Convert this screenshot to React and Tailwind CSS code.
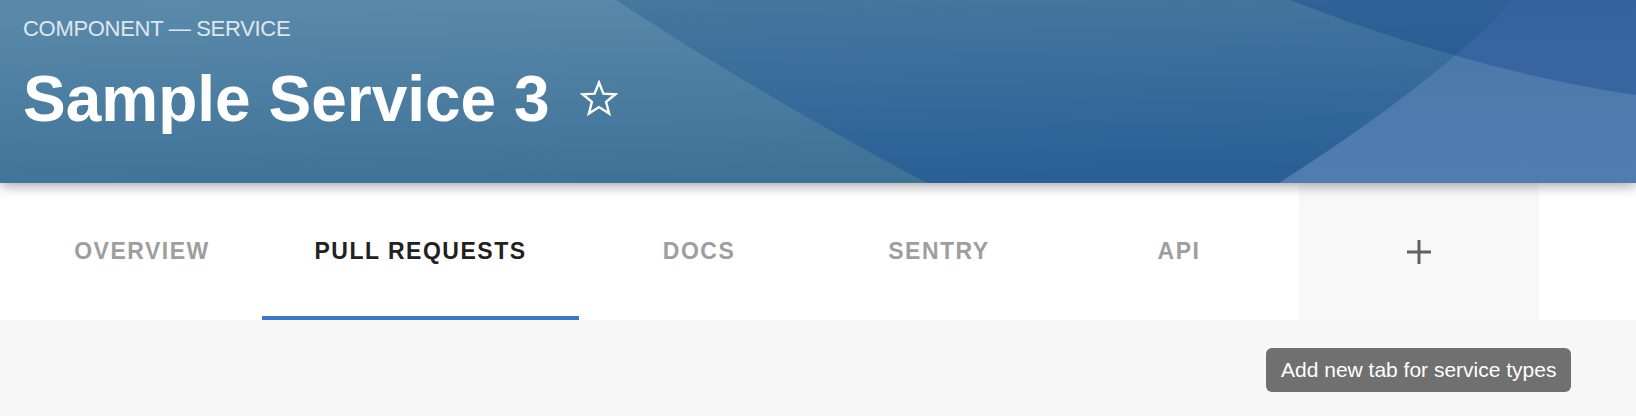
import { useState } from 'react';

const tabs = [
  { label: 'Overview', width: 'w-[240px]' },
  { label: 'Pull Requests', width: 'w-[317px]' },
  { label: 'Docs', width: 'w-[240px]' },
  { label: 'Sentry', width: 'w-[240px]' },
  { label: 'API', width: 'w-[240px]' },
];

function HeaderShapes() {
  return (
    <svg
      className="absolute inset-0 h-full w-full"
      viewBox="0 0 1636 183"
      preserveAspectRatio="none"
    >
      <defs>
        <linearGradient id="base" x1="0" y1="0" x2="0.3" y2="1">
          <stop offset="0" stopColor="#5b8bac" />
          <stop offset="1" stopColor="#3e7297" />
        </linearGradient>
        <linearGradient id="mid" x1="0" y1="0" x2="0.15" y2="1">
          <stop offset="0" stopColor="#45789f" />
          <stop offset="1" stopColor="#2b6096" />
        </linearGradient>
        <linearGradient id="right" x1="0" y1="0" x2="0" y2="1">
          <stop offset="0" stopColor="#4a77a8" />
          <stop offset="1" stopColor="#507caf" />
        </linearGradient>
      </defs>
      <rect x="0" y="0" width="1636" height="183" fill="url(#base)" />
      <path d="M616 0 Q760 95 927 183 L1279 183 Q1440 80 1514 0 Z" fill="url(#mid)" />
      <path d="M1514 0 Q1440 80 1279 183 L1636 183 L1636 0 Z" fill="url(#right)" />
      <path d="M1290 0 Q1470 70 1636 95 L1636 0 Z" fill="#0a3c88" fillOpacity="0.32" />
    </svg>
  );
}

function StarOutline() {
  return (
    <svg width="38" height="38" viewBox="0 0 38 38" fill="none">
      <path
        d="M19 2.5 L23.4 13.6 L35.3 14.3 L26.1 21.9 L29.1 33.5 L19 27.1 L8.9 33.5 L11.9 21.9 L2.7 14.3 L14.6 13.6 Z"
        stroke="white"
        strokeWidth="2.4"
        strokeLinejoin="miter"
      />
    </svg>
  );
}

export default function App() {
  const [active, setActive] = useState(1);

  return (
    <div className="h-[416px] w-full overflow-hidden bg-[#f7f7f7] font-['Liberation_Sans',Arial,sans-serif]">
      <header className="relative z-10 h-[183px] shadow-[0_3px_12px_rgba(0,0,0,0.35)]">
        <HeaderShapes />
        <div className="relative px-[23px] pt-[18px]">
          <div className="text-[22px] leading-[22px] tracking-[-0.3px] text-white/80">
            COMPONENT — SERVICE
          </div>
          <div className="mt-[27px] flex items-center gap-[30px]">
            <h1 className="text-[64px] font-bold leading-[64px] text-white">Sample Service 3</h1>
            <StarOutline />
          </div>
        </div>
      </header>

      <nav className="flex h-[137px] bg-white pl-[22px]">
        {tabs.map((tab, i) => (
          <button
            key={tab.label}
            onClick={() => setActive(i)}
            className={`relative flex h-full items-center justify-center ${tab.width} text-[23px] font-bold uppercase tracking-[1.5px] ${
              active === i ? 'text-[#212121]' : 'text-[#9e9e9e]'
            }`}
          >
            {tab.label}
            {active === i && (
              <span className="absolute bottom-0 left-0 h-[4px] w-full bg-[#3c77cf]" />
            )}
          </button>
        ))}
        <button className="flex h-full w-[240px] items-center justify-center bg-[#f8f8f8]">
          <svg width="24" height="24" viewBox="0 0 24 24">
            <path d="M12 0 V24 M0 12 H24" stroke="#616161" strokeWidth="3" />
          </svg>
        </button>
      </nav>

      <main className="relative px-[24px] pt-[97px]">
        <div className="absolute left-[1266px] top-[28px] flex h-[44px] items-center rounded-[6px] bg-[#707070] px-[15px] text-[21px] text-white">
          Add new tab for service types
        </div>
        <h2 className="text-[40px] font-bold leading-[40px] text-[#444]">Pull Requests Statistics</h2>
      </main>
    </div>
  );
}
